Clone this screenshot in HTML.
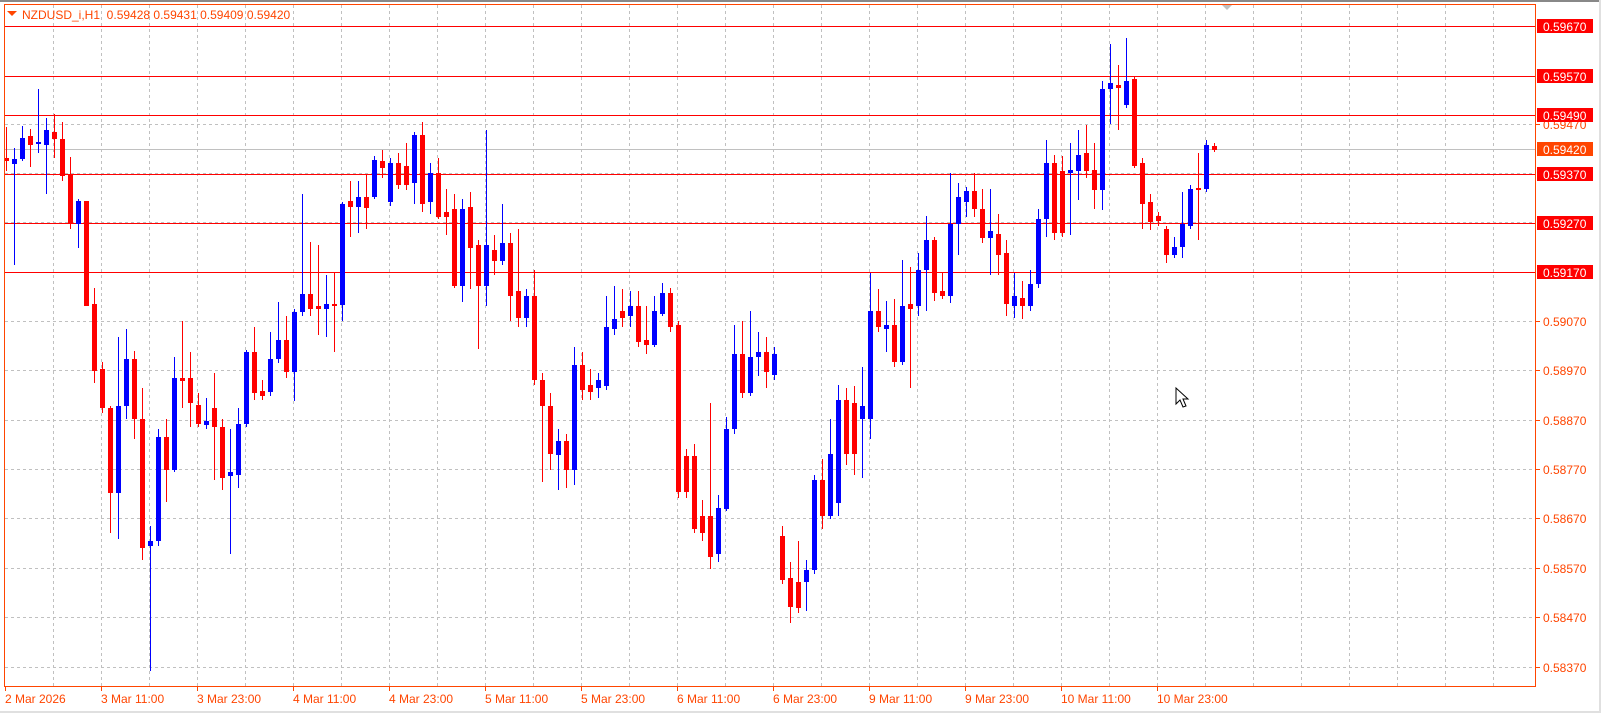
<!DOCTYPE html>
<html><head><meta charset="utf-8"><style>
html,body{margin:0;padding:0;background:#fff;width:1601px;height:713px;overflow:hidden}
svg{display:block}
text{font-family:"Liberation Sans",sans-serif;font-size:12px}
</style></head><body>
<svg id="s" width="1601" height="713" xmlns="http://www.w3.org/2000/svg">
<rect x="0" y="0" width="1601" height="713" fill="#fff"/>
<rect x="0" y="0" width="1601" height="2" fill="#888"/>
<rect x="0" y="711" width="1601" height="2" fill="#e0e0e0"/>
<rect x="1599" y="0" width="2" height="713" fill="#e0e0e0"/>
<g id="grid"></g>
<g id="lines"></g>
<g id="candles"></g>
<rect x="4.5" y="4.5" width="1531" height="682" fill="none" stroke="#ff4500" stroke-width="1"/>
<polygon points="1222,5 1232,5 1227,10" fill="#c0c0c0"/>
<polygon points="7,11 17,11 12,16" fill="#ff4500"/>
<text x="22" y="19" fill="#ff4500">NZDUSD_i,H1&#160;&#160;0.59428 0.59431 0.59409 0.59420</text>
<g id="axis"></g>
<path d="M1176,388 L1176,404 L1180,400 L1183,407 L1186,406 L1183,399 L1188,399 Z" fill="#fff" stroke="#000" stroke-width="1"/>
</svg>
<script>
var NS="http://www.w3.org/2000/svg";
function el(p,t,a,txt){var e=document.createElementNS(NS,t);for(var k in a)e.setAttribute(k,a[k]);if(txt)e.textContent=txt;document.getElementById(p).appendChild(e);return e;}
for(var x=53;x<1536;x+=48)el('grid','line',{x1:x+.5,y1:5,x2:x+.5,y2:686,stroke:'#c0c0c0','stroke-dasharray':'3,3'});
var gy=[124,173,222,272,321,370,420,469,518,568,617,667];
gy.forEach(function(y){el('grid','line',{x1:5,y1:y+.5,x2:1536,y2:y+.5,stroke:'#c0c0c0','stroke-dasharray':'3,3'});});
el('lines','line',{x1:5,y1:149.5,x2:1536,y2:149.5,stroke:'#c0c0c0'});
[26,76,115,174,223,272].forEach(function(y){el('lines','line',{x1:5,y1:y+.5,x2:1536,y2:y+.5,stroke:'#ff0000'});});
var lab=[["0.59470",124],["0.59070",321],["0.58970",370],["0.58870",420],["0.58770",469],["0.58670",518],["0.58570",568],["0.58470",617],["0.58370",667]];
lab.forEach(function(l){el('axis','line',{x1:1536,y1:l[1]+.5,x2:1540,y2:l[1]+.5,stroke:'#ff4500'});el('axis','text',{x:1543,y:l[1]+5,fill:'#ff4500'},l[0]);});
var box=[["0.59670",26,'#ff0000'],["0.59570",76,'#ff0000'],["0.59490",115,'#ff0000'],["0.59420",149,'#ff4500'],["0.59370",174,'#ff0000'],["0.59270",223,'#ff0000'],["0.59170",272,'#ff0000']];
box.forEach(function(b){el('axis','rect',{x:1537,y:b[1]-7,width:56,height:14,fill:b[2]});el('axis','text',{x:1543,y:b[1]+5,fill:'#fff'},b[0]);});
var tl=["2 Mar 2026","3 Mar 11:00","3 Mar 23:00","4 Mar 11:00","4 Mar 23:00","5 Mar 11:00","5 Mar 23:00","6 Mar 11:00","6 Mar 23:00","9 Mar 11:00","9 Mar 23:00","10 Mar 11:00","10 Mar 23:00"];
tl.forEach(function(t,k){var x=5+96*k;el('axis','line',{x1:x+.5,y1:687,x2:x+.5,y2:691,stroke:'#ff4500'});el('axis','text',{x:x,y:703,fill:'#ff4500'},t);});
var C=[
"r,155,158,125,168","b,156,161,145,260","b,136,156,124,158","r,134,142,127,164","b,139,140,88,150","b,128,142,116,190","r,130,137,112,155","r,137,173,120,178","r,172,220,154,225","b,197,220,195,243",
"r,197,300,197,300","r,298,363,282,375","r,362,400,355,405","r,400,483,398,522","b,398,483,330,528","b,352,398,322,410","r,352,410,344,430","r,410,537,380,548","b,530,535,515,657","b,428,530,420,535",
"r,428,460,410,492","b,370,460,350,462","r,370,373,315,400","r,370,395,345,418","r,397,415,385,418","b,412,416,390,420","r,400,418,365,470","r,418,468,410,480","b,462,466,420,542","b,415,465,400,478",
"b,345,415,343,418","r,345,385,320,392","r,383,388,372,392","b,352,384,325,388","b,333,352,296,356","r,333,364,310,370","b,306,364,303,393","b,288,306,190,310","r,288,303,237,310","r,300,303,240,328",
"b,298,303,270,330","r,298,300,268,345","b,200,299,198,315","r,197,203,178,232","b,193,203,178,228","r,193,204,172,225","b,157,193,153,195","r,158,165,147,175","b,160,198,155,202","r,160,182,150,185",
"r,163,182,140,186","b,133,180,130,200","r,133,200,120,208","b,170,198,160,210","r,170,213,155,215","r,208,213,185,230","r,205,280,190,282","b,205,280,195,296","r,203,243,188,283","r,240,280,235,342",
"b,240,280,128,300","r,245,256,230,270","b,238,256,200,260","r,238,290,228,315","r,285,312,225,320","b,290,312,283,320","r,290,372,265,377","r,372,398,365,472","r,398,445,385,460","b,432,446,420,480",
"r,432,460,425,478","b,358,460,340,475","r,358,382,345,392","r,377,384,362,392","b,372,380,365,390","b,320,378,290,382","b,313,322,280,328","r,305,312,283,320","b,300,310,285,320","r,300,335,285,340",
"r,333,338,300,347","b,305,338,290,340","b,287,308,277,310","r,287,320,282,325","r,318,482,315,488","r,447,482,440,488","r,447,518,435,522","r,505,522,490,530","r,505,545,395,557","b,497,542,485,550",
"b,420,498,408,500","b,347,420,318,425","r,347,385,315,390","b,350,385,305,388","b,345,350,325,368","r,345,364,330,380","b,347,367,340,372","r,525,568,515,572","r,566,594,550,610","r,570,595,530,600",
"b,558,570,548,598","b,470,558,465,562","r,470,505,450,518","b,445,505,410,508","b,392,493,377,505","r,392,445,380,455","r,395,445,378,465","b,398,410,360,468","b,305,410,268,430","r,305,320,283,325",
"b,318,322,295,345","r,318,355,293,360","b,300,355,255,358","r,298,303,262,380","b,265,300,248,310","b,235,265,212,305","r,235,287,232,295","r,285,290,268,293","b,220,290,170,297","b,193,220,180,250",
"b,187,198,183,213","r,187,205,170,213","r,205,233,185,238","b,227,233,185,270","r,229,250,210,270","r,248,298,235,310","b,290,300,268,312","r,292,300,275,313","b,278,300,265,305","b,215,278,205,282",
"b,160,215,138,232","r,160,228,152,235","r,168,228,153,232","b,167,170,140,230","b,152,168,128,196","r,150,168,123,175","r,167,186,140,205","b,88,186,80,206","b,82,88,44,122","r,84,87,64,128",
"b,80,103,38,106","r,78,163,76,165","r,160,200,155,225","r,198,218,190,226","r,212,217,208,222","r,225,250,222,258","b,242,250,232,253","b,220,242,188,253","b,185,222,182,225","r,184,186,150,235",
"b,142,185,138,188","r,143,147,140,149"];
function Y(d){return 26+(d-26)*1.0223;}
C.forEach(function(s,i){var a=s.split(','),col=a[0]=='b'?'#0000ff':'#ff0000';
var bt=Math.round(Y(+a[1])),bb=Math.round(Y(+a[2])),h=Math.round(Y(+a[3])),l=Math.round(Y(+a[4]));
var cx=6+8*i;
el('candles','rect',{x:cx,y:h,width:1,height:Math.max(1,l-h),fill:col});
el('candles','rect',{x:cx-2,y:bt,width:5,height:Math.max(2,bb-bt),fill:col});
});
</script>
</body></html>
